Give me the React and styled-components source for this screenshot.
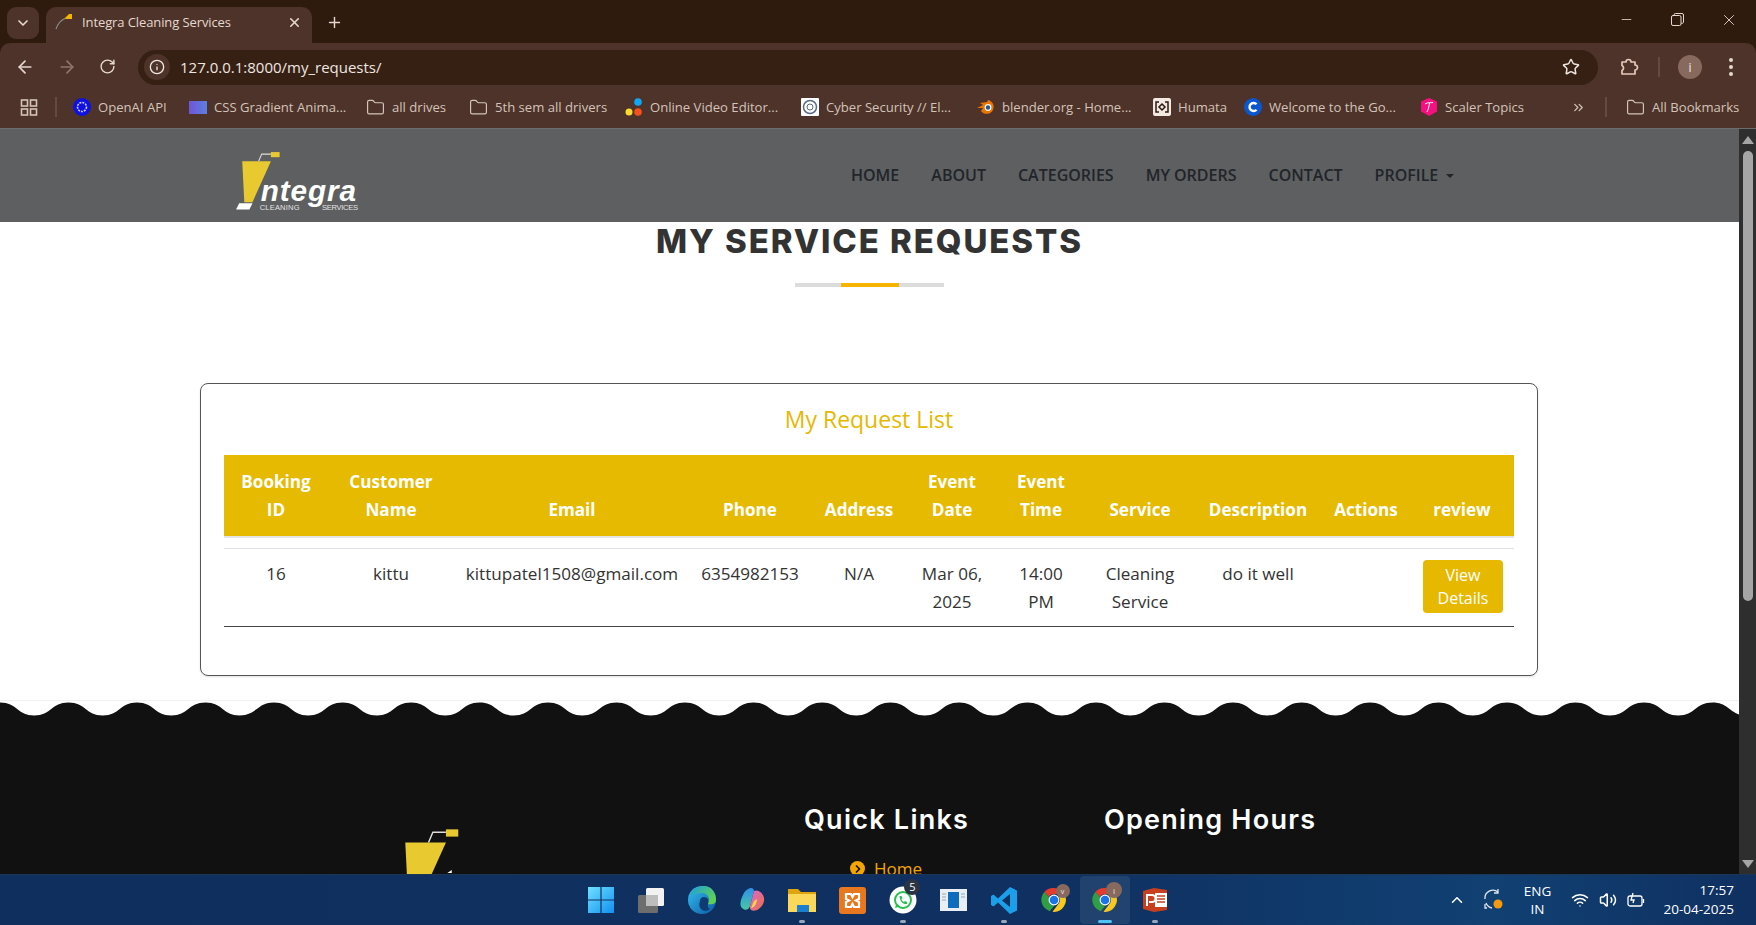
import React from 'react';
import styled, { createGlobalStyle } from 'styled-components';
import { ChevronDown, X, Plus, ArrowLeft, ArrowRight, RotateCw, Info, Star, Folder, ChevronRight, ChevronUp, Minus, Wifi, Volume2, ChevronsRight } from 'lucide-react';

const GlobalStyle = createGlobalStyle`
  html, body { margin: 0; padding: 0; height: 100%; overflow: hidden; }
  body { font-family: "Open Sans", "Liberation Sans", sans-serif; background: #fff; }
  * { box-sizing: border-box; }
`

const Screen = styled.div`
  width: 1756px;
  height: 925px;
  display: flex;
  flex-direction: column;
  overflow: hidden;
`

/* browser chrome */
const Chrome = styled.div`
  flex: none;
  background: #2f1a0e;
`

const TabStrip = styled.div`
  height: 43px;
  display: flex;
  align-items: flex-end;
  padding-left: 7px;
  color: #e6d8cf;
`

const TabSearch = styled.div`
  width: 32px;
  height: 32px;
  margin-bottom: 4px;
  border-radius: 9px;
  background: #4d3329;
  display: flex;
  align-items: center;
  justify-content: center;
`

const Tab = styled.div`
  width: 266px;
  height: 36px;
  margin-left: 7px;
  background: #4d3329;
  border-radius: 10px 10px 0 0;
  display: flex;
  align-items: center;
  padding: 0 10px 6px 9px;
  font-size: 13px;
`

const TabTitle = styled.span`
  flex: 1;
  margin-left: 8px;
  letter-spacing: -0.1px;
`

const NewTab = styled.div`
  width: 44px;
  height: 36px;
  padding-bottom: 6px;
  display: flex;
  align-items: center;
  justify-content: center;
`

const WindowControls = styled.div`
  margin-left: auto;
  height: 43px;
  display: flex;
  align-items: center;
  padding-right: 2px;
  margin-top: -1px;
`

const WindowButton = styled.div`
  width: 51px;
  display: flex;
  justify-content: center;
  margin-bottom: 4px;
`

const Toolbar = styled.div`
  height: 43px;
  padding-top: 5px;
  background: #4d3329;
  display: flex;
  align-items: center;
  color: #e6d8cf;
  border-radius: 10px 10px 0 0;
`

const NavIcons = styled.div`
  width: 138px;
  display: flex;
  padding-left: 15px;
  gap: 22px;
`

const Omnibox = styled.div`
  width: 1460px;
  height: 35px;
  background: #362014;
  border-radius: 18px;
  display: flex;
  align-items: center;
  padding: 0 18px 0 6px;
  font-size: 15px;
  color: #efe6e0;
`

const InfoChip = styled.div`
  width: 26px;
  height: 26px;
  border-radius: 50%;
  background: #4d3329;
  display: flex;
  align-items: center;
  justify-content: center;
  margin-right: 10px;
`

const UrlText = styled.span`
  flex: 1;
`

const ToolActions = styled.div`
  flex: 1;
  display: flex;
  align-items: center;
  padding-left: 21px;
`

const ToolDivider = styled.div`
  width: 2px;
  height: 20px;
  background: #664a3e;
  margin: 0 18px 0 19px;
`

const Avatar = styled.div`
  width: ${p => p.$size}px;
  height: ${p => p.$size}px;
  border-radius: 50%;
  background: #87695d;
  color: #f3ece8;
  font-size: ${p => p.$size * 0.5}px;
  display: flex;
  align-items: center;
  justify-content: center;
`

const MoreDots = styled.div`
  margin-left: 27px;
  display: flex;
  flex-direction: column;
  gap: 3px;
  span { width: 4px; height: 4px; border-radius: 50%; background: #e6d8cf; }
`

const Bookmarks = styled.div`
  height: 43px;
  background: #4d3329;
  display: flex;
  align-items: center;
  padding-left: 20px;
  color: #d4c3b9;
  font-size: 13.1px;
  border-bottom: 1px solid #6c6c6c;
`

const BarDivider = styled.div`
  width: 2px;
  height: 20px;
  background: #664a3e;
  margin: ${p => p.$margin};
`

const Bookmark = styled.div`
  width: ${p => p.$w}px;
  flex: none;
  display: flex;
  align-items: center;
  gap: 7px;
  white-space: nowrap;
`

/* page */
const Viewport = styled.div`
  flex: 1;
  min-height: 0;
  display: flex;
`

const Page = styled.div`
  flex: 1;
  min-width: 0;
  overflow: hidden;
`

const Navbar = styled.div`
  height: 93px;
  background: #5d5f61;
  display: flex;
  align-items: center;
  padding-left: 232px;
`

const LogoSlot = styled.div`
  margin-top: 11px;
`

const NavLinks = styled.div`
  display: flex;
  gap: 32px;
  margin-left: 491px;
  margin-top: -2px;
  font-size: 16px;
  font-weight: 600;
  color: #212529;
`

const Caret = styled.span`
  display: inline-block;
  margin-left: 8px;
  vertical-align: 3px;
  border-top: 4.5px solid #212529;
  border-left: 4.5px solid transparent;
  border-right: 4.5px solid transparent;
`

const Title = styled.h1`
  margin: 0;
  height: 38px;
  line-height: 38px;
  text-align: center;
  font-family: Inter, "Liberation Sans", sans-serif;
  font-size: 33px;
  font-weight: 800;
  letter-spacing: 1.9px;
  color: #333;
`

const TitleRule = styled.div`
  width: 149px;
  height: 4px;
  margin: 23px auto 0;
  background: #dcdcdc;
  display: flex;
  &::before {
    content: '';
    width: 58px;
    background: #f5b400;
    margin-left: 46px;
  }
`

const Card = styled.div`
  width: 1338px;
  height: 293px;
  margin: 96px 0 0 200px;
  border: 1px solid #555;
  border-radius: 8px;
  padding: 0 23px;
  box-shadow: 0 1px 2px rgba(0,0,0,0.12);
`

const CardTitle = styled.h3`
  margin: 0;
  height: 71px;
  padding-top: 17px;
  line-height: 36px;
  text-align: center;
  font-size: 23px;
  font-weight: 400;
  color: #e6b800;
`

const Table = styled.table`
  width: 1290px;
  table-layout: fixed;
  border-collapse: collapse;
  font-size: 17.1px;
  line-height: 28px;
  color: #333;
  text-align: center;
  tbody::before { content: ''; display: block; height: 10px; }
`

const Th = styled.th`
  background: #e6ba00;
  color: #fff;
  font-weight: 700;
  padding: 12.5px 11px;
  vertical-align: bottom;
  border-bottom: 2px solid #e4e4e4;
`

const Row = styled.tr`
  border-top: 1px solid #dee2e6;
  border-bottom: 1px solid #444;
`

const Td = styled.td`
  padding: 11px 11px 10px;
  vertical-align: top;
`

const ViewButton = styled.div`
  width: 80px;
  height: 53px;
  margin: 0 auto;
  transform: translateX(1px);
  background: #e6b800;
  border-radius: 4px;
  color: #fff;
  font-size: 16px;
  line-height: 22.5px;
  padding: 4px 14px;
`

const Footer = styled.footer`
  height: 300px;
  margin-top: 24px;
  background: #111;
  border-top: 1px solid #f2f2f2;
  position: relative;
  display: flex;
  padding: 104px 0 0 390px;
`

const WaveTop = styled.svg`
  position: absolute;
  left: 0;
  top: 0;
  display: block;
`

const FooterLogoCol = styled.div`
  width: 414px;
  margin-top: 20px;
`

const LinksCol = styled.div`
  width: 300px;
`

const FooterTitle = styled.h4`
  margin: 0 0 22px;
  line-height: 30px;
  font-family: Inter, "Liberation Sans", sans-serif;
  font-size: 27px;
  font-weight: 600;
  letter-spacing: 1.25px;
  color: #fff;
`

const FooterLink = styled.div`
  margin-left: 46px;
  display: flex;
  align-items: center;
  gap: 9px;
  font-size: 17px;
  line-height: 23px;
  color: #f5a500;
`

const ChevronBadge = styled.span`
  width: 15px;
  height: 15px;
  border-radius: 50%;
  background: #f5a500;
  display: flex;
  align-items: center;
  justify-content: center;
`

const Scrollbar = styled.div`
  width: 17px;
  flex: none;
  background: #2e2e2e;
  display: flex;
  flex-direction: column;
  align-items: center;
  padding-top: 7px;
  svg { display: block; }
`

const ScrollThumb = styled.div`
  width: 10px;
  height: 450px;
  margin-top: 7px;
  border-radius: 5px;
  background: #a5a5a5;
  margin-bottom: auto;
`

const ScrollDown = styled.div`
  margin-bottom: 6px;
`

/* taskbar */
const Taskbar = styled.div`
  height: 51px;
  flex: none;
  background: linear-gradient(90deg, #0f2f5f 0%, #0f3060 60%, #114073 85%, #0f3060 100%);
  border-top: 1px solid #1c3654;
  display: grid;
  grid-template-columns: 1fr auto 1fr;
  align-items: center;
  color: #fff;
`

const TaskIcons = styled.div`
  grid-column: 2;
  display: flex;
`

const TaskIcon = styled.div`
  width: 50.4px;
  height: 48px;
  position: relative;
  display: flex;
  align-items: center;
  justify-content: center;
  border-radius: 4px;
  background: ${p => (p.$active ? 'rgba(255,255,255,0.08)' : 'transparent')};
  &::after {
    content: '';
    display: ${p => (p.$dot ? 'block' : 'none')};
    position: absolute;
    bottom: 1px;
    left: 50%;
    transform: translateX(-50%);
    width: ${p => (p.$active ? 14 : 6)}px;
    height: 3px;
    border-radius: 2px;
    background: ${p => (p.$active ? '#4fc3f7' : '#9aa7b8')};
  }
`

const Badge = styled.span`
  position: absolute;
  top: 3px;
  right: 8px;
  width: 16px;
  height: 16px;
  border-radius: 50%;
  background: #2b3442;
  color: #fff;
  font-size: 11px;
  line-height: 16px;
  text-align: center;
`

const ProfileDot = styled.span`
  position: absolute;
  top: ${p => p.$top}px;
  right: ${p => p.$right}px;
`

const Tray = styled.div`
  grid-column: 3;
  justify-self: end;
  display: flex;
  align-items: center;
  padding-right: 22px;
  font-size: 13.5px;
`

const SyncIcon = styled.svg`
  margin-left: 17px;
`

const Lang = styled.div`
  width: 36px;
  margin-left: 15px;
  line-height: 18px;
  text-align: center;
`

const TrayIcons = styled.div`
  display: flex;
  align-items: center;
  gap: 10px;
  margin-left: 15px;
`

const Clock = styled.div`
  margin-left: 19px;
  line-height: 19px;
  text-align: right;
`

// the wave along the top of the footer
const wavePath = () => {
  const period = 68.5
  let d = 'M0 0 L0 1.5'
  for (let x = period / 2; x < 1760; x += period) {
    // down to a trough, back up to the next crest
    d += ` C${x - 17} 1.5 ${x - 17} 14.5 ${x} 14.5`
    d += ` C${x + 17} 14.5 ${x + 17} 1.5 ${x + 34.25} 1.5`
  }
  return d + ' L1780 0 Z'
}

const LogoMark = () => (
  <>
    <path d="M10 12 H38 L20 52 H12 Z" fill="#e8c92f" />
    <path d="M26 12 L29 5 H38" fill="none" stroke="#ddd" strokeWidth="1" />
    <rect x="38" y="3" width="8.5" height="5" fill="#e8c92f" />
  </>
)

const Logo = ({ width }) => (
  <svg width={width} viewBox="0 0 125 62" style={{ display: 'block' }}>
    <LogoMark />
    <path d="M4 59 L7 53 H20 L17 59 Z" fill="#fff" />
    <text x="28" y="51" fill="#fff" fontFamily="Liberation Sans" fontWeight="700" fontStyle="italic" fontSize="29" textLength="93">ntegra</text>
    <text x="27" y="60" fill="#e4e4e4" fontFamily="Liberation Sans" fontSize="7.4" textLength="39">CLEANING</text>
    <text x="88" y="60" fill="#e4e4e4" fontFamily="Liberation Sans" fontSize="7.4" textLength="35">SERVICES</text>
  </svg>
)

// the footer logo runs under the taskbar, only its top shows
const FooterMark = () => (
  <svg width="183" height="90" viewBox="0 0 125 62" style={{ display: 'block' }}>
    <LogoMark />
    <path d="M39 33 L42 31 V33 Z" fill="#fff" />
  </svg>
)

const ChromeIcon = () => (
  <svg width="26" height="26" viewBox="0 0 24 24">
    <path d="M12 1 A11 11 0 0 1 21.5 6.5 L12 6.5 A5.5 5.5 0 0 0 7.2 9.3 L3 4.6 A11 11 0 0 1 12 1Z" fill="#e33b2e" />
    <path d="M3 4.6 L7.2 9.3 L12 17.5 L8 22.3 A11 11 0 0 1 3 4.6Z" fill="#2f9e44" />
    <path d="M21.5 6.5 A11 11 0 0 1 10.6 22.9 L16.7 14.8 A5.5 5.5 0 0 0 16.7 9.2 Z" fill="#f8c81c" />
    <circle cx="12" cy="12" r="5" fill="#fff" />
    <circle cx="12" cy="12" r="4" fill="#1a73e8" />
  </svg>
)

const ProfileBubble = ({ letter, top, right, size }) => (
  <ProfileDot $top={top} $right={right}>
    <Avatar $size={size}>{letter}</Avatar>
  </ProfileDot>
)

const columns = [104, 126, 236, 120, 98, 88, 90, 108, 128, 88, 104]
const headers = [
  'Booking ID', 'Customer Name', 'Email', 'Phone', 'Address', 'Event Date',
  'Event Time', 'Service', 'Description', 'Actions', 'review',
]

export default function App() {
  return (
    <Screen>
      <GlobalStyle />
      <Chrome>
        <TabStrip>
          <TabSearch><ChevronDown size={16} strokeWidth={2.5} /></TabSearch>
          <Tab>
            <svg width="19" height="18" viewBox="0 0 19 18">
              <path d="M1 16 C3 10 6 7 11 5" fill="none" stroke="#8b8b8b" strokeWidth="1.2" />
              <path d="M10 5 L14 1 L17 1 L17 6 L11 6 Z" fill="#f5b400" />
            </svg>
            <TabTitle>Integra Cleaning Services</TabTitle>
            <X size={15} strokeWidth={2.5} />
          </Tab>
          <NewTab><Plus size={17} strokeWidth={2} /></NewTab>
          <WindowControls>
            <WindowButton><Minus size={15} strokeWidth={1.3} /></WindowButton>
            <WindowButton>
              <svg width="13" height="13" viewBox="0 0 13 13" fill="none" stroke="currentColor">
                <rect x="0.5" y="2.5" width="9.5" height="10" rx="1.5" />
                <path d="M3 2.5 V2 A1.5 1.5 0 0 1 4.5 0.5 H11 A1.5 1.5 0 0 1 12.5 2 V9 A1.5 1.5 0 0 1 10 10" />
              </svg>
            </WindowButton>
            <WindowButton><X size={18} strokeWidth={1.2} /></WindowButton>
          </WindowControls>
        </TabStrip>

        <Toolbar>
          <NavIcons>
            <ArrowLeft size={20} />
            <ArrowRight size={20} color="#8d776c" />
            <RotateCw size={17} style={{ marginTop: 1 }} />
          </NavIcons>
          <Omnibox>
            <InfoChip><Info size={16} /></InfoChip>
            <UrlText>127.0.0.1:8000/my_requests/</UrlText>
            <Star size={18} />
          </Omnibox>
          <ToolActions>
            <svg width="20" height="20" viewBox="0 0 20 20" fill="none" stroke="#e6c9b8" strokeWidth="1.7" strokeLinejoin="round">
              <path d="M3 5 H7 A2.5 2.5 0 0 1 12 5 H16 V8 A2.5 2.5 0 0 1 16 13 V17 H3 V13.5 A2.8 2.8 0 0 0 3 8.5 Z" />
            </svg>
            <ToolDivider />
            <Avatar $size={24}>i</Avatar>
            <MoreDots><span /><span /><span /></MoreDots>
          </ToolActions>
        </Toolbar>

        <Bookmarks>
          <svg width="18" height="18" viewBox="0 0 18 18" fill="none" stroke="#d4c3b9" strokeWidth="1.6">
            <rect x="1.5" y="2" width="6" height="6" /><rect x="10.5" y="2" width="6" height="6" />
            <rect x="1.5" y="11" width="6" height="6" /><rect x="10.5" y="11" width="6" height="6" />
          </svg>
          <BarDivider $margin="0 16px 0 17px" />
          <Bookmark $w={116}>
            <svg width="18" height="18" viewBox="0 0 18 18">
              <circle cx="9" cy="9" r="9" fill="#1010e0" />
              <circle cx="9" cy="9" r="4.5" fill="none" stroke="#c9c9ff" strokeWidth="1.6" strokeDasharray="2 1" />
            </svg>
            OpenAI API
          </Bookmark>
          <Bookmark $w={177}>
            <svg width="18" height="13" viewBox="0 0 18 13">
              <defs><linearGradient id="cssg" x1="0" x2="1"><stop offset="0" stopColor="#6f55d8" /><stop offset="1" stopColor="#5d7fe0" /></linearGradient></defs>
              <rect width="18" height="13" fill="url(#cssg)" />
            </svg>
            CSS Gradient Anima...
          </Bookmark>
          <Bookmark $w={103}><Folder size={19} strokeWidth={1.5} />all drives</Bookmark>
          <Bookmark $w={156}><Folder size={19} strokeWidth={1.5} />5th sem all drivers</Bookmark>
          <Bookmark $w={176}>
            <svg width="18" height="20" viewBox="0 0 18 20">
              <circle cx="13" cy="5" r="3.8" fill="#12a5f4" />
              <circle cx="4" cy="15" r="3.5" fill="#fbdc2c" />
              <circle cx="13" cy="15" r="3.8" fill="#f4511e" />
            </svg>
            Online Video Editor...
          </Bookmark>
          <Bookmark $w={176}>
            <svg width="18" height="18" viewBox="0 0 18 18">
              <rect width="18" height="18" rx="1" fill="#fff" />
              <circle cx="9" cy="9" r="6.5" fill="none" stroke="#5a6b85" strokeWidth="1.5" />
              <circle cx="9" cy="9" r="3" fill="none" stroke="#5a6b85" />
            </svg>
            Cyber Security // El...
          </Bookmark>
          <Bookmark $w={176}>
            <svg width="18" height="16" viewBox="0 0 18 16">
              <path d="M0 9 L6 6 L3 4 L10 3 L11 1 A7 7 0 1 1 4 12 L6 9Z" fill="#ea7600" />
              <circle cx="11" cy="8.5" r="3.4" fill="#fff" />
              <circle cx="11" cy="8.5" r="2.2" fill="#265787" />
            </svg>
            blender.org - Home...
          </Bookmark>
          <Bookmark $w={91}>
            <svg width="18" height="18" viewBox="0 0 18 18" fill="none">
              <rect width="18" height="18" rx="2" fill="#f3e9e2" />
              <path d="M6 4 H3 V14 H6 M12 4 H15 V14 H12" stroke="#2b1a12" strokeWidth="1.5" />
              <path d="M9 6 L12 9 L9 12 L6 9Z" stroke="#2b1a12" strokeWidth="1.5" />
            </svg>
            Humata
          </Bookmark>
          <Bookmark $w={176}>
            <svg width="18" height="18" viewBox="0 0 18 18">
              <circle cx="9" cy="9" r="9" fill="#0b57d0" />
              <path d="M12.5 6.3 A4 4 0 1 0 12.5 11.7" fill="none" stroke="#fff" strokeWidth="2.4" />
            </svg>
            Welcome to the Go...
          </Bookmark>
          <Bookmark $w={151}>
            <svg width="18" height="18" viewBox="0 0 18 18">
              <path d="M9 0 L17 3.5 V13.5 L9 18 L1 13.5 V3.5Z" fill="#f5107f" />
              <path d="M5 6 C8 4 11 5 13 4.5 M9.5 5 C9 9 8 12 7 14" fill="none" stroke="#fff" strokeWidth="1" />
            </svg>
            Scaler Topics
          </Bookmark>
          <ChevronsRight size={15} />
          <BarDivider $margin="0 19px 0 19px" />
          <Bookmark $w={120}><Folder size={19} strokeWidth={1.5} />All Bookmarks</Bookmark>
        </Bookmarks>
      </Chrome>

      <Viewport>
        <Page>
          <Navbar>
            <LogoSlot><Logo width={128} /></LogoSlot>
            <NavLinks>
              <span>HOME</span>
              <span>ABOUT</span>
              <span>CATEGORIES</span>
              <span>MY ORDERS</span>
              <span>CONTACT</span>
              <span>PROFILE<Caret /></span>
            </NavLinks>
          </Navbar>

          <Title>MY SERVICE REQUESTS</Title>
          <TitleRule />

          <Card>
            <CardTitle>My Request List</CardTitle>
            <Table>
              <colgroup>
                {columns.map((w, i) => <col key={i} width={w} />)}
              </colgroup>
              <thead>
                <tr>
                  {headers.map(h => <Th key={h}>{h}</Th>)}
                </tr>
              </thead>
              <tbody>
                <Row>
                  <Td>16</Td>
                  <Td>kittu</Td>
                  <Td>kittupatel1508@gmail.com</Td>
                  <Td>6354982153</Td>
                  <Td>N/A</Td>
                  <Td>Mar 06, 2025</Td>
                  <Td>14:00 PM</Td>
                  <Td>Cleaning Service</Td>
                  <Td>do it well</Td>
                  <Td />
                  <Td><ViewButton>View Details</ViewButton></Td>
                </Row>
              </tbody>
            </Table>
          </Card>

          <Footer>
            <WaveTop width="1739" height="16" viewBox="0 0 1739 16">
              <path d={wavePath()} fill="#fff" />
            </WaveTop>
            <FooterLogoCol><FooterMark /></FooterLogoCol>
            <LinksCol>
              <FooterTitle>Quick Links</FooterTitle>
              <FooterLink>
                <ChevronBadge><ChevronRight size={12} strokeWidth={3.5} color="#111" /></ChevronBadge>
                Home
              </FooterLink>
            </LinksCol>
            <LinksCol>
              <FooterTitle>Opening Hours</FooterTitle>
            </LinksCol>
          </Footer>
        </Page>
        <Scrollbar>
          <svg width="12" height="8" viewBox="0 0 12 8"><path d="M6 0 L12 8 H0Z" fill="#a5a5a5" /></svg>
          <ScrollThumb />
          <ScrollDown>
            <svg width="12" height="8" viewBox="0 0 12 8"><path d="M0 0 H12 L6 8Z" fill="#a5a5a5" /></svg>
          </ScrollDown>
        </Scrollbar>
      </Viewport>

      <Taskbar>
        <TaskIcons>
          <TaskIcon>
            <svg width="26" height="26" viewBox="0 0 26 26">
              <defs><linearGradient id="wing" x1="0" y1="0" x2="1" y2="1"><stop offset="0" stopColor="#6fe0ff" /><stop offset="1" stopColor="#1190f0" /></linearGradient></defs>
              <path d="M0 0 H12.4 V12.4 H0Z M13.6 0 H26 V12.4 H13.6Z M0 13.6 H12.4 V26 H0Z M13.6 13.6 H26 V26 H13.6Z" fill="url(#wing)" />
            </svg>
          </TaskIcon>
          <TaskIcon>
            <svg width="28" height="26" viewBox="0 0 28 26">
              <rect x="9" y="1" width="18" height="18" rx="1.5" fill="#f2f2f2" />
              <rect x="1" y="8" width="20" height="18" rx="1.5" fill="#6d6d6d" />
              <rect x="9" y="8" width="12" height="11" fill="#bdbdbd" />
            </svg>
          </TaskIcon>
          <TaskIcon>
            <svg width="28" height="28" viewBox="0 0 28 28">
              <defs>
                <linearGradient id="edge1" x1="0" y1="0" x2="1" y2="1"><stop offset="0" stopColor="#35c1f1" /><stop offset="1" stopColor="#0c59a4" /></linearGradient>
                <linearGradient id="edge2" x1="0" y1="0" x2="1" y2="0.6"><stop offset="0" stopColor="#1b9de2" /><stop offset="1" stopColor="#5fd34f" /></linearGradient>
              </defs>
              <circle cx="14" cy="14" r="14" fill="url(#edge1)" />
              <path d="M2 10 C4 2 12 0 16 0 C24 0 28 7 28 14 C28 18 24 19 20 18 C23 13 20 7 14 7 C8 7 4 8 2 10Z" fill="url(#edge2)" />
              <path d="M12 15 C12 10 18 10 20 13 C21 17 18 21 22 23 C16 28 9 22 12 15Z" fill="#0f3a72" />
            </svg>
          </TaskIcon>
          <TaskIcon>
            <svg width="26" height="26" viewBox="0 0 26 26">
              <defs>
                <linearGradient id="cop1" x1="0" y1="0" x2="0" y2="1"><stop offset="0" stopColor="#2f8fe8" /><stop offset="1" stopColor="#46c7a5" /></linearGradient>
                <linearGradient id="cop2" x1="0" y1="0" x2="1" y2="1"><stop offset="0" stopColor="#d468d8" /><stop offset="1" stopColor="#f0703f" /></linearGradient>
              </defs>
              <path d="M9 2 C12 0 15 1 15 4 L11 19 C10 23 6 24 3 21 C0 18 2 12 4 8 C5 5 7 3 9 2Z" fill="url(#cop1)" />
              <path d="M15 4 C18 2 24 5 25 11 C26 16 22 21 18 23 C14 25 10 23 11 19 L15 4Z" fill="url(#cop2)" />
              <path d="M12 21 C15 21 18 17 18 12 L15 14 Z" fill="#f8d24a" />
            </svg>
          </TaskIcon>
          <TaskIcon $dot>
            <svg width="30" height="26" viewBox="0 0 30 26">
              <path d="M1 2 H11 L14 5 H29 V24 H1Z" fill="#e0a50c" />
              <path d="M1 7 H29 V25 H1Z" fill="#fbd85a" />
              <rect x="10" y="18" width="12" height="7" fill="#1a7fd0" />
            </svg>
          </TaskIcon>
          <TaskIcon>
            <svg width="27" height="27" viewBox="0 0 27 27">
              <rect width="27" height="27" rx="3" fill="#e8781f" />
              <path d="M7 7 H12 L13.5 10 L15 7 H20 V12 L17 13.5 L20 15 V20 H15 L13.5 17 L12 20 H7 V15 L10 13.5 L7 12Z" fill="none" stroke="#fff" strokeWidth="2.2" />
            </svg>
          </TaskIcon>
          <TaskIcon $dot>
            <svg width="28" height="28" viewBox="0 0 28 28">
              <circle cx="14" cy="14" r="13.5" fill="#fff" />
              <circle cx="14" cy="14" r="8" fill="none" stroke="#25c050" strokeWidth="2" />
              <path d="M6 22 L7.5 17 L11 20.5Z" fill="#25c050" />
              <path d="M10.5 10 C11 16 14 18.5 18 18 L18 16 L16 15 L15 16 C13.5 15.5 12.5 14 12.5 13 L13.5 12 L12.5 10Z" fill="#25c050" />
            </svg>
            <Badge>5</Badge>
          </TaskIcon>
          <TaskIcon>
            <svg width="27" height="22" viewBox="0 0 27 22">
              <rect width="27" height="22" fill="#e8eef4" />
              <rect x="8" y="3" width="11" height="16" fill="#0f6cbd" />
              <path d="M2 5 H6 M2 8 H6 M2 11 H6 M21 5 H25 M21 8 H25" stroke="#9aa7b8" />
            </svg>
          </TaskIcon>
          <TaskIcon $dot>
            <svg width="26" height="27" viewBox="0 0 26 27">
              <path d="M19 0 L26 3.5 V23.5 L19 27 L7 15.5 L2.5 19.5 L0 18 V9 L2.5 7.5 L7 11.5Z M19 7 L11 13.5 L19 20Z" fill="#1a9fe8" fillRule="evenodd" />
            </svg>
          </TaskIcon>
          <TaskIcon>
            <ChromeIcon />
            <ProfileBubble letter="v" top={8} right={10} size={14} />
          </TaskIcon>
          <TaskIcon $active $dot>
            <ChromeIcon />
            <ProfileBubble letter="i" top={6} right={8} size={16} />
          </TaskIcon>
          <TaskIcon $dot>
            <svg width="26" height="26" viewBox="0 0 26 26">
              <path d="M12 1 L25 3 V23 L12 25 L1 22 V4Z" fill="#c8401f" />
              <rect x="13" y="6" width="12" height="14" fill="#fff" />
              <path d="M15 9 H23 M15 12 H23 M15 15 H23" stroke="#c8401f" strokeWidth="1.4" />
              <path d="M5 19 V8 H10 A3 3 0 0 1 10 15 H7" fill="none" stroke="#fff" strokeWidth="2" />
            </svg>
          </TaskIcon>
        </TaskIcons>
        <Tray>
          <ChevronUp size={18} />
          <SyncIcon width="22" height="24" viewBox="0 0 22 24" fill="none" stroke="#dfe7f0" strokeWidth="1.3">
            <path d="M2 11 A8 8 0 0 1 15 4 M15 1 V5 H11 M3 15 A8 8 0 0 0 9 20 M4 20 H2 V16" />
            <circle cx="15" cy="16" r="4.5" fill="#f59a0c" stroke="none" />
          </SyncIcon>
          <Lang>ENG<br />IN</Lang>
          <TrayIcons>
            <Wifi size={18} />
            <Volume2 size={18} />
            <svg width="18" height="16" viewBox="0 0 18 16" fill="none" stroke="#fff" strokeWidth="1.3">
              <rect x="1" y="4" width="14" height="10" rx="2" />
              <path d="M16.5 7 V11" />
              <path d="M6 1 L4 8 H7 L6 11" />
            </svg>
          </TrayIcons>
          <Clock>17:57<br />20-04-2025</Clock>
        </Tray>
      </Taskbar>
    </Screen>
  );
}
